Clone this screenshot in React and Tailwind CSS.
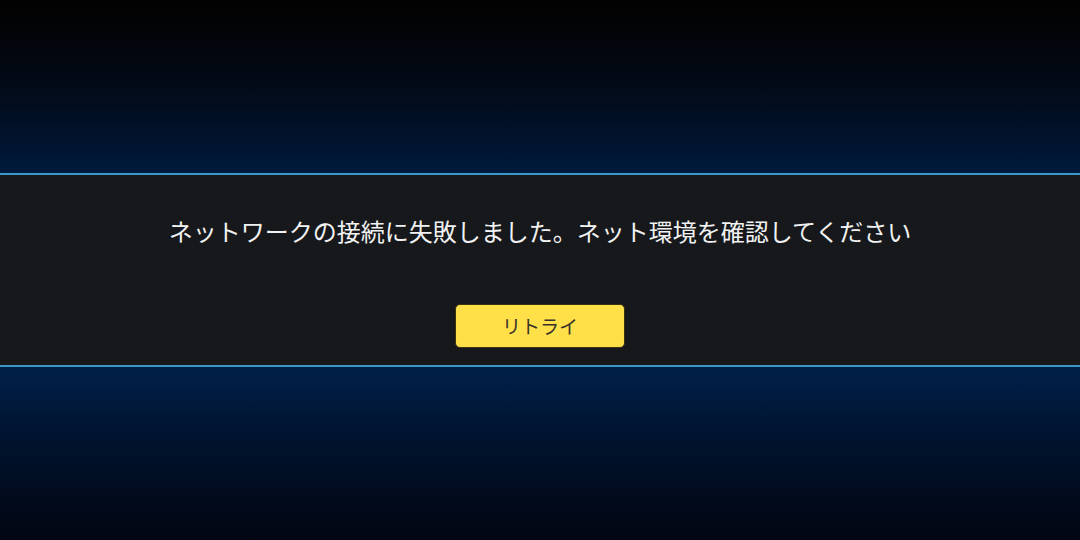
const App = () => {
  return (
    <div className="w-[1080px] h-[540px] flex flex-col overflow-hidden" style={{ fontFamily: '"Noto Sans CJK JP", "Noto Sans", sans-serif' }}>
      <div className="h-[173px] bg-gradient-to-b from-[#020202] via-[#020a18] to-[#001a3c]" />

      <div className="h-[194px] border-y-2 border-[#3b97c6] bg-[#16181b] flex flex-col items-center">
        <p className="mt-[40px] text-[24px] leading-[32px] text-[#f2f2f2]">
          ネットワークの接続に失敗しました。ネット環境を確認してください
        </p>
        <button className="mt-[57px] w-[170px] h-[44px] rounded-[5px] bg-[#ffe048] border border-[#3b3210] text-[#3a3428] text-[19px]">
          リトライ
        </button>
      </div>

      <div className="flex-1 bg-gradient-to-b from-[#002049] via-[#00112a] to-[#020611]" />
    </div>
  )
}

export default App
